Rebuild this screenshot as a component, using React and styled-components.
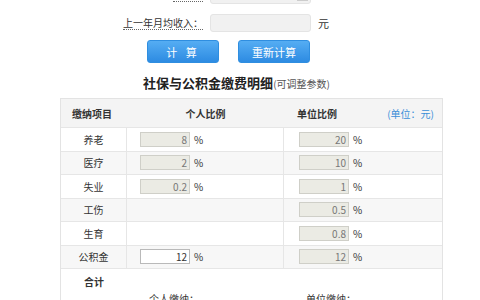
import React from 'react'
import styled, { createGlobalStyle } from 'styled-components'

const GlobalStyle = createGlobalStyle`
  html, body { margin: 0; padding: 0; background: #fff; }
  body {
    font-family: "Noto Sans CJK SC", "Noto Sans", sans-serif;
    font-size: 10px;
    color: #333;
    overflow: hidden;
  }
`

const Page = styled.div`
  width: 480px;
  height: 300px;
  overflow: hidden;
`

const Form = styled.div`
  display: grid;
  grid-template-columns: 203px 101px auto;
  grid-auto-rows: 18px;
  row-gap: 10px;
  column-gap: 7px;
  margin-top: -14px;
  align-items: center;
`

const Label = styled.span`
  justify-self: end;
  line-height: 13px;
  border-bottom: 1px dotted #666;
  color: #333;
`

const Field = styled.div`
  position: relative;
  height: 18px;
  box-sizing: border-box;
  background: #f1f1f1;
  border: 1px solid #e4e4e4;
  border-radius: 3px;
  padding-left: 6px;
  line-height: 16px;
  color: #444;
`

const Arrow = styled.span`
  position: absolute;
  right: 2px;
  top: 2px;
  width: 11px;
  height: 12px;
  background: #e2e2e2;
  border: 1px solid #ccc;
  box-sizing: border-box;
`

const Unit = styled.span`
  color: #333;
  font-size: 11px;
`

const Actions = styled.div`
  display: flex;
  gap: 19px;
  padding-left: 147px;
  margin-top: 8px;
`

const Button = styled.button`
  width: 72px;
  height: 23px;
  border: 1px solid #2f8ee0;
  border-radius: 3px;
  background: linear-gradient(#55adf3, #2d8be2);
  color: #fff;
  font-family: inherit;
  font-size: 11px;
  letter-spacing: ${p => (p.$wide ? '3px' : '0')};
  padding: 0;
`

const Title = styled.div`
  margin-top: 12px;
  height: 15px;
  line-height: 15px;
  text-align: center;
  padding-right: 7px;
  font-size: 13px;
  font-weight: bold;
  color: #222;

  small {
    font-size: 10px;
    font-weight: normal;
    color: #555;
  }
`

const Table = styled.div`
  margin: 8px 0 0 60px;
  width: 383px;
  box-sizing: border-box;
  border: 1px solid #e3e3e3;
  border-bottom: none;
`

const Row = styled.div`
  display: grid;
  grid-template-columns: 66px 157px 1fr;
  height: ${p => (p.$head ? '29px' : '23.5px')};
  box-sizing: border-box;
  border-bottom: 1px solid #e6e6e6;
  background: ${p => (p.$head ? '#f4f4f4' : p.$alt ? '#f7f7f7' : '#fff')};
  font-weight: ${p => (p.$head ? 'bold' : 'normal')};
`

const Cell = styled.div`
  display: flex;
  align-items: center;
  box-sizing: border-box;
  justify-content: ${p => p.$align || 'flex-start'};
  padding-left: ${p => p.$pad || 0}px;
  padding-right: ${p => p.$padRight || 0}px;
  border-right: ${p => (p.$divider ? '1px solid #e6e6e6' : 'none')};
  color: #333;
`

const Note = styled.span`
  color: #3a8fd8;
  font-weight: normal;
`

const Rate = styled.span`
  width: 50px;
  height: 15px;
  box-sizing: border-box;
  border: 1px solid ${p => (p.$editable ? '#b9b9b9' : '#cfcfc8')};
  background: ${p => (p.$editable ? '#fff' : '#ebebe4')};
  color: ${p => (p.$editable ? '#333' : '#777')};
  text-align: right;
  padding-right: 2px;
  line-height: 13px;
  font-size: 10px;
  margin-right: 4px;
`

const Total = styled.div`
  display: grid;
  grid-template-columns: 66px 157px 1fr;
  grid-template-rows: 18px 16px;
  padding-top: 4px;

  b {
    text-align: center;
    line-height: 18px;
  }
`

const Sum = styled.span`
  grid-row: 2;
  grid-column: ${p => p.$col};
  padding-left: 22px;
  line-height: 16px;
`

const items = [
  { name: '养老', own: '8', unit: '20' },
  { name: '医疗', own: '2', unit: '10' },
  { name: '失业', own: '0.2', unit: '1' },
  { name: '工伤', own: null, unit: '0.5' },
  { name: '生育', own: null, unit: '0.8' },
  { name: '公积金', own: '12', unit: '12', editable: true },
]

export default function App() {
  return (
    <Page>
      <GlobalStyle />
      <Form>
        <Label>城市：</Label>
        <Field>北京<Arrow /></Field>
        <span />
        <Label>上一年月均收入：</Label>
        <Field />
        <Unit>元</Unit>
      </Form>
      <Actions>
        <Button $wide>计 算</Button>
        <Button>重新计算</Button>
      </Actions>
      <Title>社保与公积金缴费明细<small>(可调整参数)</small></Title>
      <Table>
        <Row $head>
          <Cell $pad={11}>缴纳项目</Cell>
          <Cell $align="center">个人比例</Cell>
          <Cell $align="space-between" $pad={13} $padRight={8}>
            单位比例<Note>(单位：元)</Note>
          </Cell>
        </Row>
        {items.map((it, i) => (
          <Row key={it.name} $alt={i % 2 === 1}>
            <Cell $align="center" $divider>{it.name}</Cell>
            <Cell $pad={13} $divider>
              {it.own !== null && (
                <>
                  <Rate $editable={it.editable}>{it.own}</Rate>%
                </>
              )}
            </Cell>
            <Cell $pad={15}>
              <Rate>{it.unit}</Rate>%
            </Cell>
          </Row>
        ))}
        <Total>
          <b>合计</b>
          <Sum $col={2}>个人缴纳：</Sum>
          <Sum $col={3}>单位缴纳：</Sum>
        </Total>
      </Table>
    </Page>
  )
}
